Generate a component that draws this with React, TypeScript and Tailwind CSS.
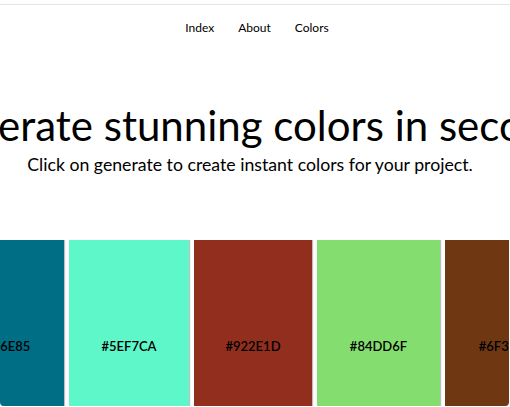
import React from "react";

const colors = [
  { hex: "#006E85", cls: "bg-[#006E85] w-[120px]" },
  { hex: "#5EF7CA", cls: "bg-[#5EF7CA] w-[120px]" },
  { hex: "#922E1D", cls: "bg-[#922E1D] w-[118px]" },
  { hex: "#84DD6F", cls: "bg-[#84DD6F] w-[123px]" },
  { hex: "#6F3813", cls: "bg-[#6F3813] w-[120px]" },
];

export default function App() {
  return (
    <div className="h-[407px] w-[510px] overflow-hidden bg-white font-['Lato',sans-serif] text-black">
      <div className="mt-[4px] border-t border-[#e5e5e5]" />
      <nav className="flex justify-center gap-[24px] pl-[4px] pt-[15px] text-[12px] leading-[16px]">
        <a>Index</a>
        <a>About</a>
        <a>Colors</a>
      </nav>
      <div className="mt-[64px] flex justify-center">
        <h1 className="shrink-0 whitespace-nowrap text-[42px] leading-[50px]">
          Generate stunning colors in seconds
        </h1>
      </div>
      <div className="mt-[3px] flex justify-center">
        <p className="mr-[10px] shrink-0 whitespace-nowrap text-[17.7px] leading-[24px]">
          Click on generate to create instant colors for your project.
        </p>
      </div>
      <div className="mt-[63px] flex h-[166px] w-[509px] justify-start gap-[5px] overflow-hidden rounded-b-[4px]">
        <div className="ml-[-61px] w-0 shrink-0" />
        {colors.map((c) => (
          <div
            key={c.hex}
            className={`${c.cls} flex h-[166px] shrink-0 justify-center pt-[98px] shadow-[1px_0_1px_rgba(0,0,0,0.25)]`}
          >
            <span className="text-[13px] font-semibold leading-[16px]">{c.hex}</span>
          </div>
        ))}
      </div>
    </div>
  );
}
